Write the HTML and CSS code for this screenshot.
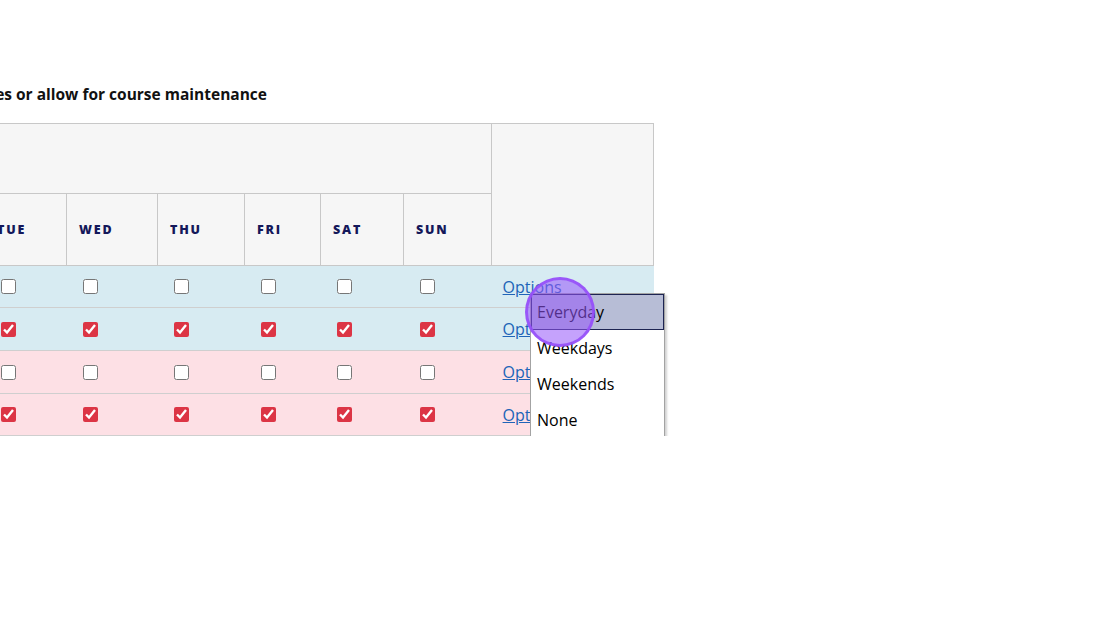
FILE: index.html
```html
<!DOCTYPE html>
<html lang="en">
<head>
    <meta charset="UTF-8">
    <meta name="viewport" content="width=device-width, initial-scale=1.0">
    <title>Course schedule</title>
    <link rel="stylesheet" href="styles.css">
</head>
<body>
    <div class="page">
        <div class="title-row">
            <h2 class="title">Choose the days to block tee times or allow for course maintenance</h2>
        </div>
        <table class="schedule">
            <colgroup>
                <col style="width: 82px">
                <col style="width: 91px">
                <col style="width: 87px">
                <col style="width: 76px">
                <col style="width: 83px">
                <col style="width: 88px">
                <col style="width: 162px">
            </colgroup>
            <thead>
                <tr class="head-top">
                    <th colspan="6"></th>
                    <th rowspan="2"></th>
                </tr>
                <tr class="head-days">
                    <th>TUE</th>
                    <th>WED</th>
                    <th>THU</th>
                    <th>FRI</th>
                    <th>SAT</th>
                    <th>SUN</th>
                </tr>
            </thead>
            <tbody>
                <tr class="row-blue">
                    <td><input type="checkbox"></td>
                    <td><input type="checkbox"></td>
                    <td><input type="checkbox"></td>
                    <td><input type="checkbox"></td>
                    <td><input type="checkbox"></td>
                    <td><input type="checkbox"></td>
                    <td class="opt-cell"><a href="#" class="opt-link">Options</a></td>
                </tr>
                <tr class="row-blue">
                    <td><input type="checkbox" checked></td>
                    <td><input type="checkbox" checked></td>
                    <td><input type="checkbox" checked></td>
                    <td><input type="checkbox" checked></td>
                    <td><input type="checkbox" checked></td>
                    <td><input type="checkbox" checked></td>
                    <td class="opt-cell"><a href="#" class="opt-link">Options</a></td>
                </tr>
                <tr class="row-pink">
                    <td><input type="checkbox"></td>
                    <td><input type="checkbox"></td>
                    <td><input type="checkbox"></td>
                    <td><input type="checkbox"></td>
                    <td><input type="checkbox"></td>
                    <td><input type="checkbox"></td>
                    <td class="opt-cell"><a href="#" class="opt-link">Options</a></td>
                </tr>
                <tr class="row-pink">
                    <td><input type="checkbox" checked></td>
                    <td><input type="checkbox" checked></td>
                    <td><input type="checkbox" checked></td>
                    <td><input type="checkbox" checked></td>
                    <td><input type="checkbox" checked></td>
                    <td><input type="checkbox" checked></td>
                    <td class="opt-cell"><a href="#" class="opt-link">Options</a></td>
                </tr>
            </tbody>
        </table>

        <!-- lista abierta del primer "Options" -->
        <ul class="dropdown">
            <li class="selected">Everyday</li>
            <li>Weekdays</li>
            <li>Weekends</li>
            <li>None</li>
        </ul>
        <span class="cursor-dot"></span>
    </div>
</body>
</html>
```

FILE: styles.css
```css
body {
    font-family: "Open Sans", "Noto Sans", sans-serif;
    margin: 0;
    padding: 0;
    background: #fff;
    color: #111;
}
.page {
    position: relative;
    margin-left: -16px;
    padding-top: 82px;
}
.title-row {
    display: flex;
    justify-content: flex-end; /* el texto sobra por la izquierda */
    width: 283px;
    margin-bottom: 17px;
}
.title {
    margin: 0;
    font-size: 15.5px;
    font-weight: 700;
    line-height: 24px;
    white-space: nowrap;
    color: #111;
}
.schedule {
    border-collapse: collapse;
    table-layout: fixed;
    width: 669px;
}
.schedule th {
    background-color: #f6f6f6;
    border: 1px solid #c8c8c8;
    text-align: left;
    padding: 0 0 0 12px;
    font-size: 12.5px;
    font-weight: 800;
    letter-spacing: 1.8px;
    color: #14185a;
}
.head-top th {
    height: 69px;
}
.head-days th {
    height: 71px;
}
.schedule td {
    padding: 0 0 0 14px;
    border-bottom: 1px solid #cfcfcf;
    vertical-align: middle;
    height: 41px;
}
.schedule tbody tr:nth-child(2) td,
.schedule tbody tr:nth-child(3) td {
    height: 42px;
}
.row-blue td {
    background-color: #d7ebf2;
}
.row-pink td {
    background-color: #fde0e5;
}
.schedule input[type="checkbox"] {
    display: block;
    width: 15px;
    height: 15px;
    margin: 0 0 0 2px;
    accent-color: #dc3545;
}
.schedule .opt-cell {
    padding-left: 11px;
}
.opt-link {
    color: #2064b8;
    font-size: 16px;
    text-decoration: underline;
}
.dropdown {
    position: absolute;
    left: 546px;
    top: 293px;
    width: 133px;
    margin: 0;
    padding: 0;
    list-style: none;
    background: #fff;
    border: 1px solid #a3a3a3;
    box-shadow: 2px 2px 2px rgba(0, 0, 0, 0.18);
}
.dropdown li {
    height: 34px;
    line-height: 34px;
    padding-left: 5px;
    font-size: 16px;
    color: #000;
    border: 1px solid transparent;
}
.dropdown li.selected {
    background-color: #b7bdd6;
    border-color: #1d2452;
}
.cursor-dot {
    position: absolute;
    left: 541px;
    top: 277px;
    width: 64px;
    height: 64px;
    border-radius: 50%;
    background: rgba(150, 85, 250, 0.55);
    border: 3px solid rgba(150, 80, 250, 0.9);
}
```
